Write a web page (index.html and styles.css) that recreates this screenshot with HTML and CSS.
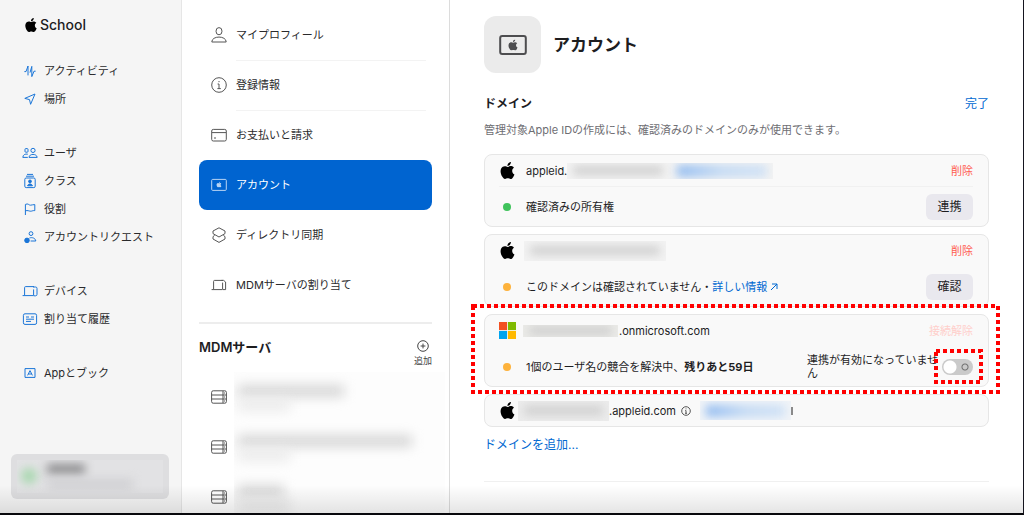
FILE: index.html
```html
<!DOCTYPE html>
<html lang="ja">
<head>
    <meta charset="UTF-8">
    <meta name="viewport" content="width=device-width, initial-scale=1.0">
    <title>School - アカウント</title>
    <link rel="stylesheet" href="styles.css">
</head>
<body>
    <!-- Shared logo -->
    <svg class="defs" aria-hidden="true">
        <symbol id="apple" viewBox="0 0 24 24">
            <path fill="currentColor" d="M12.152 6.896c-.948 0-2.415-1.078-3.96-1.04-2.04.027-3.91 1.183-4.961 3.014-2.117 3.675-.546 9.103 1.519 12.09 1.013 1.454 2.208 3.09 3.792 3.039 1.52-.065 2.09-.987 3.935-.987 1.831 0 2.35.987 3.96.948 1.637-.026 2.676-1.48 3.676-2.948 1.156-1.688 1.636-3.325 1.662-3.415-.039-.013-3.182-1.221-3.22-4.857-.026-3.04 2.48-4.494 2.597-4.559-1.429-2.09-3.623-2.324-4.39-2.376-2-.156-3.675 1.09-4.61 1.09zM15.53 3.83c.843-1.012 1.4-2.427 1.245-3.83-1.207.052-2.662.805-3.532 1.818-.78.896-1.454 2.338-1.273 3.714 1.338.104 2.715-.688 3.559-1.701"/>
        </symbol>
        <symbol id="server" viewBox="0 0 16 16">
            <rect x=".6" y="1.8" width="14.8" height="12.4" rx="1.6"/>
            <path d="M.6 6h14.8M.6 10h14.8M12 2v12"/>
            <path d="M13 4h1M13 8h1M13 12h1"/>
        </symbol>
    </svg>

    <div class="app">
        <aside class="sidebar">
            <div class="brand"><svg><use href="#apple"/></svg>School</div>

            <nav class="side-nav">
                <ul>
                    <li><a href="#"><svg viewBox="0 0 16 16"><path d="M2.4 8.600H4L6 3v9.400M8 9.600 9.800 3.400V13.600L12 8.200h1.600"/></svg>アクティビティ</a></li>
                    <li><a href="#"><svg viewBox="0 0 16 16"><path d="M13 3 2.8 7.4l4.7 1.2 1.1 4.7z"/></svg>場所</a></li>
                </ul>
                <ul>
                    <li><a href="#"><svg viewBox="0 0 16 16"><rect x="3" y="3.6" width="3" height="3.6" rx=".8"/><circle cx="11" cy="5.4" r="2.1"/><path d="M5.8 9.2C3 8.6 1 9.8.8 12.4h5M7 12.4c.2-4 7.8-4 8.2 0z"/></svg>ユーザ</a></li>
                    <li><a href="#"><svg viewBox="0 0 16 16"><path d="M5 1.4h6M4 3.2h8"/><rect x="2.8" y="5" width="10.4" height="9.6" rx="1.4"/><circle cx="8" cy="8.4" r="1.4" fill="currentColor"/><path fill="currentColor" d="M5.6 12.8c.4-2.4 4.4-2.4 4.8 0z"/></svg>クラス</a></li>
                    <li><a href="#"><svg viewBox="0 0 16 16"><path d="M3.4 14V3.4c2.8-1.4 3.6 1 5.2.8 1.4 0 2.4-.8 4.2-.6v6c-2.4-.2-3 .8-4.6.6-1.4-.2-2.4-1-4.800-.4"/></svg>役割</a></li>
                    <li><a href="#"><svg viewBox="0 0 16 16"><circle cx="9" cy="4.6" r="1.9"/><path d="M7.400 9c3-1 6 .2 6.400 3H8.600"/><circle cx="5" cy="11.4" r="2.3" fill="currentColor"/></svg>アカウントリクエスト</a></li>
                </ul>
                <ul>
                    <li><a href="#"><svg viewBox="0 0 16 16"><path d="M2.6 12V4.6q0-1 1-1H12M.6 12.6H11"/><path d="M11 4h2.6q1.4 0 1.4 1.4v6q0 1.4-1.4 1.4H11.6V6.4"/></svg>デバイス</a></li>
                    <li><a href="#"><svg viewBox="0 0 16 16"><rect x="1.4" y="2.8" width="13.2" height="10.6" rx="1.6"/><path d="M4 6h3M9 6h3M4 8.2h8M4 10.4h5"/></svg>割り当て履歴</a></li>
                </ul>
                <ul>
                    <li><a href="#"><svg viewBox="0 0 16 16"><path d="M3 3.6v8.800h10V3.6zM5.6 10.4 8 5.6l2.400 4.800M6.400 9h3.200"/></svg>Appとブック</a></li>
                </ul>
            </nav>

            <button class="user-card" aria-label="ユーザメニュー">
                <span class="user-redacted"><i class="avatar"></i><i class="name"></i><i class="mail"></i></span>
            </button>
        </aside>

        <section class="settings">
            <ul class="settings-nav">
                <li class="lined"><a href="#"><svg viewBox="0 0 16 16"><ellipse cx="8" cy="4.200" rx="3" ry="3.600"/><path d="M.8 15c0-6.600 14.400-6.600 14.400 0z"/></svg><span>マイプロフィール</span></a></li>
                <li class="lined"><a href="#"><svg viewBox="0 0 16 16"><circle cx="8" cy="8" r="7.300"/><path d="M6.600 7H8v4.400M6.400 11.600h3.400M8 4v1.200"/></svg><span>登録情報</span></a></li>
                <li><a href="#"><svg viewBox="0 0 16 16"><rect x=".7" y="2.400" width="14.600" height="11.600" rx="1.600"/><path d="M1 5.600h14M3 11h2"/></svg><span>お支払いと請求</span></a></li>
                <li><a href="#" class="active" aria-current="page"><svg viewBox="0 0 16 16"><rect x=".7" y="2.400" width="14.600" height="11" rx="1"/><use href="#apple" x="5" y="4.600" width="6" height="6" stroke="none"/></svg><span>アカウント</span></a></li>
                <li><a href="#"><svg viewBox="0 0 16 16"><path d="M8 .8 14 4v2.600L8 10 2 6.600V4zM3.600 8.400 2 9.600V12l6 3.400 6-3.400V9.600l-1.600-1.200"/></svg><span>ディレクトリ同期</span></a></li>
                <li><a href="#"><svg viewBox="0 0 16 16"><path d="M2.600 12V4.400q0-1 1-1H12M.6 12.600H11"/><path d="M10.400 3.400h2.200l2 1.600v7.600h-3V5.600"/></svg><span>MDMサーバの割り当て</span></a></li>
            </ul>

            <div class="servers-head">
                <h2>MDMサーバ</h2>
                <button class="add-server">
                    <svg viewBox="0 0 12 12"><circle cx="6" cy="6" r="5.300"/><path d="M6 3.600v4.800M3.600 6h4.800"/></svg>
                    追加
                </button>
            </div>

            <ul class="server-list">
                <li><svg><use href="#server"/></svg><span class="server-redacted"><i class="mid"></i><i class="sub"></i></span></li>
                <li><svg><use href="#server"/></svg><span class="server-redacted"><i class="long"></i><i class="sub"></i></span></li>
                <li><svg><use href="#server"/></svg><span class="server-redacted"><i class="short"></i><i class="sub"></i></span></li>
            </ul>
        </section>

        <main class="content">
            <header class="page-head">
                <div class="page-icon">
                    <svg viewBox="0 0 28 20"><rect x="1.200" y="1" width="25.600" height="18" rx="2"/><use href="#apple" x="8.500" y="4.500" width="11" height="11" stroke="none"/></svg>
                </div>
                <h1>アカウント</h1>
            </header>

            <div class="section-head">
                <h2>ドメイン</h2>
                <a href="#">完了</a>
            </div>
            <p class="description">管理対象Apple IDの作成には、確認済みのドメインのみが使用できます。</p>

            <div class="domains">
                <article class="domain">
                    <div class="row top lined">
                        <svg class="logo"><use href="#apple"/></svg>
                        <span>appleid.</span>
                        <span class="redacted wide"><i></i><i class="blue"></i></span>
                        <button class="danger">削除</button>
                    </div>
                    <div class="row status">
                        <span class="dot green"></span>
                        <span class="message">確認済みの所有権</span>
                        <button class="btn">連携</button>
                    </div>
                </article>

                <article class="domain">
                    <div class="row top">
                        <svg class="logo"><use href="#apple"/></svg>
                        <span class="redacted medium"><i></i></span>
                        <button class="danger">削除</button>
                    </div>
                    <div class="row status">
                        <span class="dot orange"></span>
                        <span class="message">このドメインは確認されていません・<a href="#">詳しい情報 <svg class="arrow" viewBox="0 0 8 8"><path d="M1 7l6-6M2 1h5v5"/></svg></a></span>
                        <button class="btn">確認</button>
                    </div>
                </article>

                <article class="domain">
                    <div class="row top">
                        <svg class="logo" viewBox="0 0 16 16">
                            <path fill="#f25022" d="M0 0h7.600v7.600H0z"/><path fill="#7fba00" d="M8.400 0H16v7.600H8.400z"/>
                            <path fill="#00a4ef" d="M0 8.400h7.600V16H0z"/><path fill="#ffb900" d="M8.400 8.400H16V16H8.400z"/>
                        </svg>
                        <span class="redacted tenant"><i></i></span>
                        <span>.onmicrosoft.com</span>
                        <button class="danger" disabled>接続解除</button>
                    </div>
                    <div class="row status">
                        <span class="dot orange"></span>
                        <span class="message">1個のユーザ名の競合を解決中、<strong>残りあと59日</strong></span>
                        <label class="toggle-label" for="federation">連携が有効になっていません</label>
                        <span class="toggle-wrap">
                            <input type="checkbox" id="federation" class="toggle">
                            <svg class="marker"><rect x="2" y="2"/></svg>
                        </span>
                    </div>
                    <svg class="marker"><rect x="2" y="2"/></svg>
                </article>

                <article class="domain">
                    <div class="row single">
                        <svg class="logo"><use href="#apple"/></svg>
                        <span class="redacted reserved"><i></i></span>
                        <span>.appleid.com</span>
                        <svg class="info" viewBox="0 0 10 10"><circle cx="5" cy="5" r="4.300"/><path d="M4.300 4.500H5v2.700M4 7.300h2M5 2.500v.8"/></svg>
                        <span class="redacted link"><i class="blue"></i></span>
                        <span class="cut"></span>
                    </div>
                </article>
            </div>

            <a href="#" class="add-domain">ドメインを追加...</a>
        </main>
    </div>
</body>
</html>
```
FILE: styles.css
```css
* {
    box-sizing: border-box;
}

body {
    margin: 0;
    height: 100vh;
    overflow: hidden;
    background-color: #fff;
    color: #1d1d1f;
    font-family: Inter, "Noto Sans CJK JP", sans-serif;
    font-size: 11px;
    line-height: 16px;
}

h1, h2, p, ul {
    margin: 0;
    padding: 0;
}

ul {
    list-style: none;
}

a {
    color: #0068d1;
    text-decoration: none;
}

button {
    border: none;
    padding: 0;
    background: none;
    font: inherit;
    color: inherit;
    cursor: pointer;
}

svg {
    flex: none;
    fill: none;
    stroke: currentColor;
}

.defs {
    display: none;
}

.app {
    display: grid;
    grid-template-columns: 182px 268px 1fr;
    height: 100%;
    position: relative;
    border-right: 1px solid #15151f;
    border-bottom: 2px solid #08080c;
}

/* shade along the bottom edge of the window */
.app::after {
    content: "";
    position: absolute;
    left: 0;
    right: 0;
    bottom: 0;
    height: 28px;
    background: linear-gradient(rgba(0, 0, 0, 0), rgba(0, 0, 0, 0.1));
    pointer-events: none;
}

/* Sidebar */
.sidebar {
    display: flex;
    flex-direction: column;
    min-height: 0;
    padding: 16px 12px 14px 11px;
    background-color: #f5f5f5;
    border-right: 1px solid #e6e6e6;
}

.brand {
    display: flex;
    align-items: center;
    gap: 2px;
    padding-left: 13px;
    font-size: 14px;
    line-height: 18px;
    font-weight: 500;
}

.brand svg {
    width: 14px;
    height: 14px;
    stroke: none;
    color: #000;
}

.side-nav {
    display: flex;
    flex-direction: column;
    gap: 26px;
    padding: 22px 0 0 11px;
}

.side-nav a {
    display: flex;
    align-items: center;
    gap: 6px;
    height: 28px;
    padding-top: 1px;
    color: #2a2a2c;
}

.side-nav svg {
    width: 16px;
    height: 16px;
    color: #1a75d8;
}

.user-card {
    height: 45px;
    margin-top: auto;
    padding: 6px;
    border-radius: 6px;
    background-color: #dedee0;
}

.user-redacted {
    display: grid;
    grid-template-columns: 16px 1fr;
    grid-template-rows: 12px 10px;
    column-gap: 10px;
    row-gap: 3px;
    height: 100%;
    padding: 4px;
    overflow: hidden;
    background-color: #e2e2e4;
}

.user-redacted i {
    filter: blur(5px);
}

.user-redacted .avatar {
    grid-row: 1 / 3;
    height: 16px;
    margin-top: 4px;
    border-radius: 8px;
    background-color: #a9d8b0;
}

.user-redacted .name {
    width: 38px;
    height: 10px;
    background-color: #8c8c8e;
}

.user-redacted .mail {
    width: 86px;
    background-color: #d0d0d3;
}

/* Settings list */
.settings {
    min-height: 0;
    overflow: hidden;
    padding: 10px 17px 0;
    border-right: 1px solid #dcdcdc;
}

.settings-nav {
    padding-bottom: 12px;
    border-bottom: 2px solid #ededed;
}

.settings-nav a {
    display: flex;
    align-items: center;
    gap: 9px;
    height: 50px;
    padding: 0 6px 0 12px;
    color: #2a2a2c;
}

.settings-nav svg {
    width: 16px;
    height: 16px;
    color: #555;
}

.settings-nav span {
    flex: 1;
    padding-top: 1px;
    line-height: 49px;
    border-bottom: 1px solid transparent;
}

.settings-nav .lined span {
    border-color: #f3f3f3;
}

.settings-nav .active {
    border-radius: 8px;
    background-color: #0064d0;
    color: #fff;
}

.settings-nav .active svg {
    color: #b8d4f3;
}

.servers-head {
    display: flex;
    justify-content: space-between;
    padding-top: 14px;
}

.servers-head h2 {
    font-size: 13px;
    line-height: 18px;
    font-weight: 600;
}

.add-server {
    display: flex;
    flex-direction: column;
    align-items: center;
    gap: 2px;
    font-size: 9px;
    line-height: 14px;
    color: #444;
}

.add-server svg {
    width: 12px;
    height: 12px;
    margin-top: 2px;
}

.server-list {
    padding: 4px 0 0 12px;
}

.server-list li {
    display: flex;
    align-items: center;
    gap: 7px;
    height: 50px;
}

.server-list svg {
    width: 16px;
    height: 16px;
    color: #555;
}

.server-redacted {
    display: flex;
    flex-direction: column;
    gap: 2px;
    flex: 1;
    height: 50px;
    padding: 13px 4px 0;
    overflow: hidden;
    margin-right: -13px;
    background-color: #fdfdfd;
}

.server-redacted i {
    height: 12px;
    background-color: #d6d6d6;
    filter: blur(6px);
}

.server-redacted .mid {
    width: 106px;
}

.server-redacted .long {
    width: 174px;
}

.server-redacted .short {
    width: 46px;
}

.server-redacted .sub {
    width: 52px;
    background-color: #ebebeb;
}

/* Account page */
.content {
    min-width: 0;
    padding: 16px 34px 0;
}

.page-head {
    display: flex;
    align-items: center;
    gap: 12px;
}

.page-icon {
    display: flex;
    align-items: center;
    justify-content: center;
    width: 57px;
    height: 57px;
    border-radius: 12px;
    background-color: #ebebeb;
    color: #4d4d4f;
}

.page-icon svg {
    width: 28px;
    height: 20px;
    stroke-width: 2;
}

h1 {
    font-size: 17px;
    line-height: 24px;
    font-weight: 700;
}

.section-head {
    display: flex;
    justify-content: space-between;
    padding-top: 22px;
    font-size: 12px;
    line-height: 18px;
}

.section-head h2 {
    font-size: 12px;
    font-weight: 700;
}

.description {
    padding: 9px 0 16px;
    color: #6e6e73;
}

.domains {
    display: flex;
    flex-direction: column;
    gap: 7px;
}

.domain {
    position: relative;
    padding: 0 15px 0 14px;
    border: 1px solid #e6e6e6;
    border-radius: 8px;
    background-color: #f9f9f9;
}

.row {
    display: flex;
    align-items: center;
}

.row.top {
    height: 32px;
    border-bottom: 1px solid transparent;
}

.row.top.lined {
    border-color: #f1f1f1;
}

.row.status {
    height: 39px;
}

.row.single {
    height: 31px;
}

.logo {
    width: 17px;
    height: 17px;
    margin-right: 10px;
    stroke: none;
    color: #000;
}

.dot {
    width: 8px;
    height: 8px;
    margin: 0 15px 0 4px;
    border-radius: 4px;
}

.green {
    background-color: #40c35c;
}

.orange {
    background-color: #fdb23c;
}

.message {
    flex: 1;
}

.arrow {
    width: 8px;
    height: 8px;
}

.danger {
    margin-left: auto;
    color: #ff5c50;
}

.danger:disabled {
    color: #ffcfcb;
}

.btn {
    width: 47px;
    height: 26px;
    border-radius: 6px;
    background-color: #e9e8ee;
    font-size: 12px;
}

/* Hidden names: a clipped patch with a blurred bar in it */
.redacted {
    display: flex;
    align-items: center;
    gap: 14px;
    height: 16px;
    padding: 0 6px;
    overflow: hidden;
    background-color: #f3f3f3;
}

.redacted i {
    flex: 1;
    height: 9px;
    background-color: #cfcfcf;
    filter: blur(5px);
}

.redacted .blue {
    height: 12px;
    background: linear-gradient(90deg, #8fbaf0, #c3daf4 50%, #cfe1f5);
}

.redacted.wide {
    width: 206px;
}

.redacted.medium {
    width: 142px;
    height: 20px;
    margin-left: -2px;
}

.redacted.tenant {
    width: 95px;
    height: 12px;
    margin: 0 1px 0 -3px;
    background-color: #ebebe8;
}

.redacted.reserved {
    width: 91px;
    height: 20px;
    margin-left: -8px;
    background-color: #ececec;
}

.redacted.link {
    width: 91px;
    height: 19px;
    margin-left: 9px;
    background-color: #f1f4f8;
}

.cut {
    width: 2px;
    height: 8px;
    background-color: #8a8a8a;
}

.info {
    width: 10px;
    height: 10px;
    margin-left: 5px;
    color: #555;
}

.toggle-label {
    width: 132px;
    margin-right: 3px;
    line-height: 13px;
}

.toggle-wrap {
    display: flex;
    position: relative;
}

.toggle {
    appearance: none;
    width: 31px;
    height: 16px;
    margin: 0;
    border-radius: 8px;
    background:
        radial-gradient(circle at 8px 8px, #fff 6px, transparent 7px),
        radial-gradient(circle at 23px 8px, transparent 2px, #707070 3px, transparent 4px),
        #cacaca;
}

/* Red call-out frames */
.marker {
    position: absolute;
    top: -11px;
    left: -14px;
    width: calc(100% + 26px);
    height: calc(100% + 19px);
    color: #f00;
    stroke-width: 4;
    stroke-dasharray: 4 3;
    pointer-events: none;
}

.marker rect {
    width: calc(100% - 4px);
    height: calc(100% - 4px);
}

.toggle-wrap .marker {
    top: -10px;
    left: -8px;
    width: calc(100% + 18px);
    height: calc(100% + 19px);
}

.add-domain {
    display: block;
    margin-top: 9px;
    padding-bottom: 27px;
    border-bottom: 1px solid #f0f0f0;
    font-size: 12px;
    line-height: 18px;
}
```
